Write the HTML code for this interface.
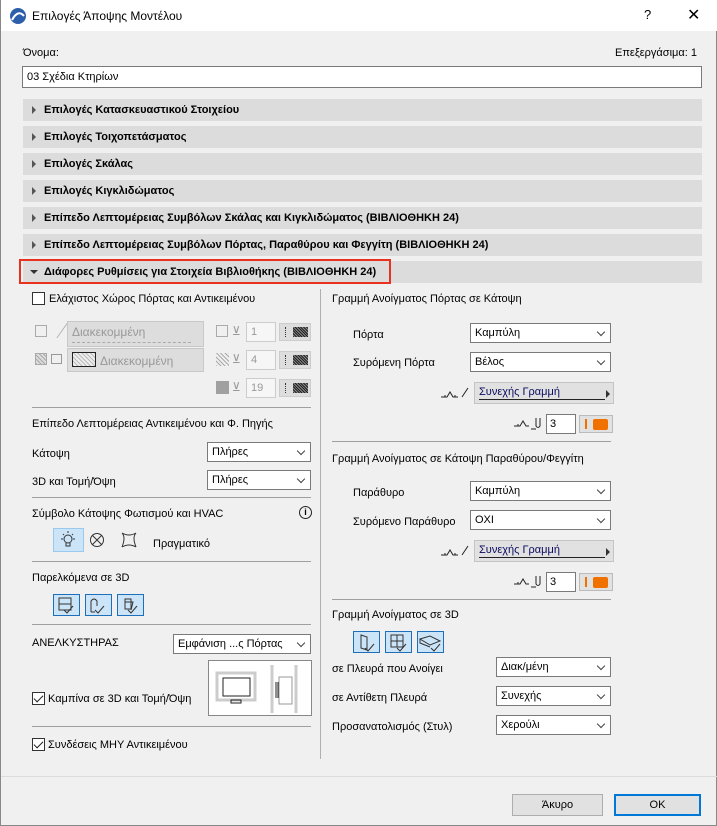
<!DOCTYPE html>
<html><head><meta charset="utf-8"><style>
*{box-sizing:border-box;margin:0;padding:0}
body{width:717px;height:826px;background:#f0f0f0;font-family:"Liberation Sans","DejaVu Sans",sans-serif;font-size:11px;color:#000;position:relative;overflow:hidden;border-left:1px solid #888;border-right:1px solid #888;border-bottom:1px solid #888}
.a{position:absolute}
.title{left:0;top:0;width:717px;height:31px;background:#fff}
.hdr{left:22px;width:679px;height:22px;background:#dcdcdc;font-weight:bold;font-size:11px;padding:5px 0 0 21px}
.hdr:before{content:"";position:absolute;left:9px;top:7px;border-left:4px solid #555;border-top:4px solid transparent;border-bottom:4px solid transparent}
.hdr.open:before{left:7px;top:9px;border-top:4px solid #333;border-left:4px solid transparent;border-right:4px solid transparent;border-bottom:0}
.sel{background:#fff;border:1px solid #7a7a7a;height:20px;padding:3px 4px;font-size:11px}
.sel:after{content:"";position:absolute;right:6px;top:5px;width:5px;height:5px;border-right:1px solid #444;border-bottom:1px solid #444;transform:rotate(45deg)}
.hr{height:1px;background:#a0a0a0}
.cb{width:13px;height:13px;border:1px solid #333;background:#fff}
.cb.on:after{content:"";position:absolute;left:3px;top:0px;width:4px;height:8px;border-right:1.5px solid #222;border-bottom:1.5px solid #222;transform:rotate(45deg)}
.gbox{background:#ddd;border:1px solid #c8c8c8;color:#999}
.num{background:#f6f6f6;border:1px solid #ccc;color:#999;padding:3px 4px;width:30px;height:20px}
.pat{background:#ddd;border:1px solid #ccc;width:32px;height:18px}
.pat:after{content:"";position:absolute;left:13px;top:3px;width:15px;height:10px;background:repeating-linear-gradient(45deg,#222 0 1px,#888 1px 2px)}
.pat:before{content:"";position:absolute;left:5px;top:3px;height:10px;border-left:1px dotted #333}
.btn3{width:27px;height:22px;background:#cce4f7;border:1px solid #1c6fb8}
.lbtn{background:#e1e1e1;border:1px solid #adadad;height:22px;text-align:center;padding-top:4px}
.tog{background:#e1e1e1;border:1px solid #bbb;width:34px;height:18px}
.tog:before{content:"";position:absolute;left:5px;top:3px;width:2px;height:10px;background:#f07000}
.tog:after{content:"";position:absolute;left:13px;top:3px;width:15px;height:11px;background:#f07000;border-radius:2px}
.lt{background:#e1e1e1;border:1px solid #c4c4c4;width:140px;height:22px;padding:3px 4px;color:#0a0a60}
.lt u{position:absolute;left:4px;right:8px;bottom:3px;height:1px;background:#222}
.lt:after{content:"";position:absolute;right:3px;top:7px;border-left:4px solid #333;border-top:4px solid transparent;border-bottom:4px solid transparent}
.t{padding-top:2px}
</style></head><body>
<div class="a title"></div>
<svg class="a" style="left:8px;top:7px" width="18" height="18"><circle cx="9" cy="9" r="8" fill="#2c5faa"/><path d="M3 13 Q9 2 15 9" stroke="#fff" stroke-width="2" fill="none"/></svg>
<div class="a" style="left:31px;top:9px;font-size:12px">Επιλογές Άποψης Μοντέλου</div>
<div class="a" style="left:643px;top:7px;font-size:13px">?</div>
<div class="a" style="left:686px;top:5px;font-size:16px">✕</div>

<div class="a" style="left:22px;top:47px">Όνομα:</div>
<div class="a" style="left:614px;top:47px">Επεξεργάσιμα: 1</div>
<div class="a" style="left:21px;top:66px;width:680px;height:22px;background:#fff;border:1px solid #7a7a7a;padding:4px 4px">03 Σχέδια Κτηρίων</div>

<div class="a hdr" style="top:99px">Επιλογές Κατασκευαστικού Στοιχείου</div>
<div class="a hdr" style="top:126px">Επιλογές Τοιχοπετάσματος</div>
<div class="a hdr" style="top:153px">Επιλογές Σκάλας</div>
<div class="a hdr" style="top:180px">Επιλογές Κιγκλιδώματος</div>
<div class="a hdr" style="top:207px">Επίπεδο Λεπτομέρειας Συμβόλων Σκάλας και Κιγκλιδώματος (ΒΙΒΛΙΟΘΗΚΗ 24)</div>
<div class="a hdr" style="top:234px">Επίπεδο Λεπτομέρειας Συμβόλων Πόρτας, Παραθύρου και Φεγγίτη (ΒΙΒΛΙΟΘΗΚΗ 24)</div>
<div class="a hdr open" style="top:261px">Διάφορες Ρυθμίσεις για Στοιχεία Βιβλιοθήκης (ΒΙΒΛΙΟΘΗΚΗ 24)</div>
<div class="a" style="left:18px;top:259px;width:372px;height:25px;border:2px solid #e8321e"></div>

<div class="a" style="left:319px;top:289px;width:1px;height:470px;background:#b0b0b0"></div>

<!-- left column -->
<div class="a cb" style="left:31px;top:292px"></div>
<div class="a t" style="left:48px;top:291px">Ελάχιστος Χώρος Πόρτας και Αντικειμένου</div>
<div class="a" style="left:34px;top:325px;width:12px;height:12px;border:1px solid #aaa"></div>
<div class="a" style="left:50px;top:322px;width:12px;height:16px;border-right:1px solid #aaa;transform:skewX(-35deg)"></div>
<div class="a gbox" style="left:66px;top:321px;width:137px;height:26px;padding:3px 4px;font-size:12px">Διακεκομμένη<div class="a" style="left:4px;right:12px;top:20px;border-top:1px dashed #aaa"></div></div>
<div class="a" style="left:34px;top:353px;width:12px;height:12px;background:repeating-linear-gradient(45deg,#aaa 0 1px,#ddd 1px 3px);border:1px solid #aaa"></div>
<div class="a" style="left:50px;top:354px;width:11px;height:10px;border:1px solid #999"></div>
<div class="a gbox" style="left:66px;top:348px;width:137px;height:24px;padding:5px 0 0 32px;font-size:12px">Διακεκομμένη<div class="a" style="left:4px;top:3px;width:24px;height:15px;border:1px solid #222;background:repeating-linear-gradient(45deg,#bbb 0 1px,#eee 1px 3px)"></div></div>
<div class="a" style="left:215px;top:325px;width:12px;height:12px;border:1px solid #aaa"></div>
<div class="a" style="left:215px;top:353px;width:13px;height:13px;background:repeating-linear-gradient(45deg,#aaa 0 1px,transparent 1px 3px)"></div>
<div class="a" style="left:215px;top:381px;width:13px;height:13px;background:#a0a0a0"></div>
<div class="a" style="left:231px;top:324px;color:#999;font-size:12px">⊻</div>
<div class="a" style="left:231px;top:352px;color:#999;font-size:12px">⊻</div>
<div class="a" style="left:231px;top:380px;color:#999;font-size:12px">⊻</div>
<div class="a num" style="left:245px;top:322px">1</div>
<div class="a num" style="left:245px;top:350px">4</div>
<div class="a num" style="left:245px;top:378px">19</div>
<div class="a pat" style="left:278px;top:323px"></div>
<div class="a pat" style="left:278px;top:351px"></div>
<div class="a pat" style="left:278px;top:379px"></div>
<div class="a hr" style="left:31px;top:407px;width:279px"></div>

<div class="a t" style="left:31px;top:416px">Επίπεδο Λεπτομέρειας Αντικειμένου και Φ. Πηγής</div>
<div class="a t" style="left:31px;top:446px">Κάτοψη</div>
<div class="a sel" style="left:206px;top:442px;width:104px">Πλήρες</div>
<div class="a t" style="left:31px;top:474px">3D και Τομή/Όψη</div>
<div class="a sel" style="left:206px;top:470px;width:104px">Πλήρες</div>
<div class="a hr" style="left:31px;top:497px;width:279px"></div>

<div class="a t" style="left:31px;top:506px">Σύμβολο Κάτοψης Φωτισμού και HVAC</div>
<div class="a" style="left:298px;top:506px;width:13px;height:13px;border:1.3px solid #222;border-radius:50%;font-size:9px;text-align:center;line-height:11px;font-weight:bold">i</div>
<div class="a" style="left:52px;top:528px;width:31px;height:24px;background:#cce4f7;border:1px solid #99c9ef"></div>
<svg class="a" style="left:52px;top:528px" width="31" height="24"><circle cx="15" cy="11" r="4" fill="none" stroke="#333"/><path d="M13 15v3h4v-3M15 3v2M8 11h2M20 11h2M10 6l1 1M20 6l-1 1" stroke="#333" fill="none"/></svg>
<svg class="a" style="left:88px;top:532px" width="16" height="16"><circle cx="8" cy="8" r="6.5" fill="none" stroke="#333"/><path d="M3.5 3.5l9 9M12.5 3.5l-9 9" stroke="#333"/></svg>
<svg class="a" style="left:118px;top:531px" width="20" height="18"><path d="M3 2q4 4 0 14M17 2q-4 4 0 14M3 2q7 4 14 0M3 16q7-4 14 0" stroke="#333" fill="none"/></svg>
<div class="a t" style="left:152px;top:536px">Πραγματικό</div>
<div class="a hr" style="left:31px;top:561px;width:279px"></div>

<div class="a t" style="left:31px;top:570px">Παρελκόμενα σε 3D</div>
<div class="a btn3" style="left:52px;top:594px"></div>
<div class="a btn3" style="left:84px;top:594px"></div>
<div class="a btn3" style="left:116px;top:594px"></div>
<svg class="a" style="left:52px;top:594px" width="92" height="22"><path d="M6 4h12v12H6zM6 10h12M11 16l3 3 6-7M38 18v-11q3-4 6 0v5M38 18l4 0M42 16l3 3 6-7M72 5h6v10h-6zM72 8h8l-2 8M75 16l3 3 6-7" stroke="#333" fill="none" stroke-width="1"/></svg>
<div class="a hr" style="left:31px;top:624px;width:279px"></div>

<div class="a t" style="left:31px;top:635px">ΑΝΕΛΚΥΣΤΗΡΑΣ</div>
<div class="a sel" style="left:172px;top:634px;width:138px">Εμφάνιση ...ς Πόρτας</div>
<div class="a" style="left:207px;top:660px;width:104px;height:56px;background:#fff;border:1px solid #888"></div>
<svg class="a" style="left:207px;top:660px" width="104" height="56"><rect x="9" y="13" width="38" height="27" fill="none" stroke="#ccc" stroke-width="3"/><rect x="15" y="18" width="27" height="18" fill="none" stroke="#222"/><path d="M23 40h10v3h-10z" fill="none" stroke="#222"/><path d="M64 5v48M88 5v48" stroke="#ccc" stroke-width="3"/><rect x="71" y="17" width="13" height="27" fill="none" stroke="#999"/><path d="M68 22v16M70 22v16" stroke="#222"/></svg>
<div class="a cb on" style="left:31px;top:692px"></div>
<div class="a t" style="left:47px;top:691px">Καμπίνα σε 3D και Τομή/Όψη</div>
<div class="a hr" style="left:31px;top:726px;width:279px"></div>
<div class="a cb on" style="left:31px;top:738px"></div>
<div class="a t" style="left:47px;top:737px">Συνδέσεις ΜΗΥ Αντικειμένου</div>

<!-- right column -->
<div class="a t" style="left:331px;top:291px">Γραμμή Ανοίγματος Πόρτας σε Κάτοψη</div>
<div class="a t" style="left:352px;top:327px">Πόρτα</div>
<div class="a sel" style="left:469px;top:323px;width:141px">Καμπύλη</div>
<div class="a t" style="left:352px;top:355px">Συρόμενη Πόρτα</div>
<div class="a sel" style="left:469px;top:352px;width:141px">Βέλος</div>
<svg class="a" style="left:439px;top:385px" width="32" height="14"><path d="M1 12h6l3-5 3 5h5M5 12v-2M15 12v-2M22 12l6-9" stroke="#222" fill="none"/></svg>
<div class="a lt" style="left:473px;top:382px">Συνεχής Γραμμή<u></u></div>
<svg class="a" style="left:512px;top:415px" width="32" height="16"><path d="M1 11h6l3-5 3 5h3M5 11v-2M18 14h5M23 3v8q2 3 4 0V3" stroke="#222" fill="none"/></svg>
<div class="a" style="left:545px;top:414px;width:30px;height:20px;background:#fff;border:1px solid #7a7a7a;padding:3px 3px">3</div>
<div class="a tog" style="left:578px;top:415px"></div>
<div class="a hr" style="left:331px;top:441px;width:279px"></div>

<div class="a t" style="left:331px;top:451px">Γραμμή Ανοίγματος σε Κάτοψη Παραθύρου/Φεγγίτη</div>
<div class="a t" style="left:352px;top:485px">Παράθυρο</div>
<div class="a sel" style="left:469px;top:481px;width:141px">Καμπύλη</div>
<div class="a t" style="left:352px;top:514px">Συρόμενο Παράθυρο</div>
<div class="a sel" style="left:469px;top:510px;width:141px">ΟΧΙ</div>
<svg class="a" style="left:439px;top:543px" width="32" height="14"><path d="M1 12h6l3-5 3 5h5M5 12v-2M15 12v-2M22 12l6-9" stroke="#222" fill="none"/></svg>
<div class="a lt" style="left:473px;top:540px">Συνεχής Γραμμή<u></u></div>
<svg class="a" style="left:512px;top:573px" width="32" height="16"><path d="M1 11h6l3-5 3 5h3M5 11v-2M18 14h5M23 3v8q2 3 4 0V3" stroke="#222" fill="none"/></svg>
<div class="a" style="left:545px;top:572px;width:30px;height:20px;background:#fff;border:1px solid #7a7a7a;padding:3px 3px">3</div>
<div class="a tog" style="left:578px;top:573px"></div>
<div class="a hr" style="left:331px;top:599px;width:279px"></div>

<div class="a t" style="left:331px;top:607px">Γραμμή Ανοίγματος σε 3D</div>
<div class="a btn3" style="left:352px;top:631px"></div>
<div class="a btn3" style="left:384px;top:631px"></div>
<div class="a btn3" style="left:416px;top:631px"></div>
<svg class="a" style="left:352px;top:631px" width="92" height="22"><path d="M8 4l6 2v13l-6-2zM12 17l3 3 6-7M38 4h12v12H38zM44 4v12M38 10h12M44 17l3 3 6-7M67 8l10-3 10 5-10 4zM67 8v4l10 4M78 17l3 3 6-7" stroke="#333" fill="none"/></svg>
<div class="a t" style="left:331px;top:661px">σε Πλευρά που Ανοίγει</div>
<div class="a sel" style="left:495px;top:657px;width:115px">Διακ/μένη</div>
<div class="a t" style="left:331px;top:690px">σε Αντίθετη Πλευρά</div>
<div class="a sel" style="left:495px;top:686px;width:115px">Συνεχής</div>
<div class="a t" style="left:331px;top:719px">Προσανατολισμός (Στυλ)</div>
<div class="a sel" style="left:495px;top:715px;width:115px">Χερούλι</div>

<div class="a" style="left:0;top:776px;width:717px;height:1px;background:#dcdcdc"></div>
<div class="a lbtn" style="left:511px;top:794px;width:91px">Άκυρο</div>
<div class="a lbtn" style="left:613px;top:794px;width:87px;border:2px solid #0078d7;padding-top:3px">OK</div>
</body></html>
